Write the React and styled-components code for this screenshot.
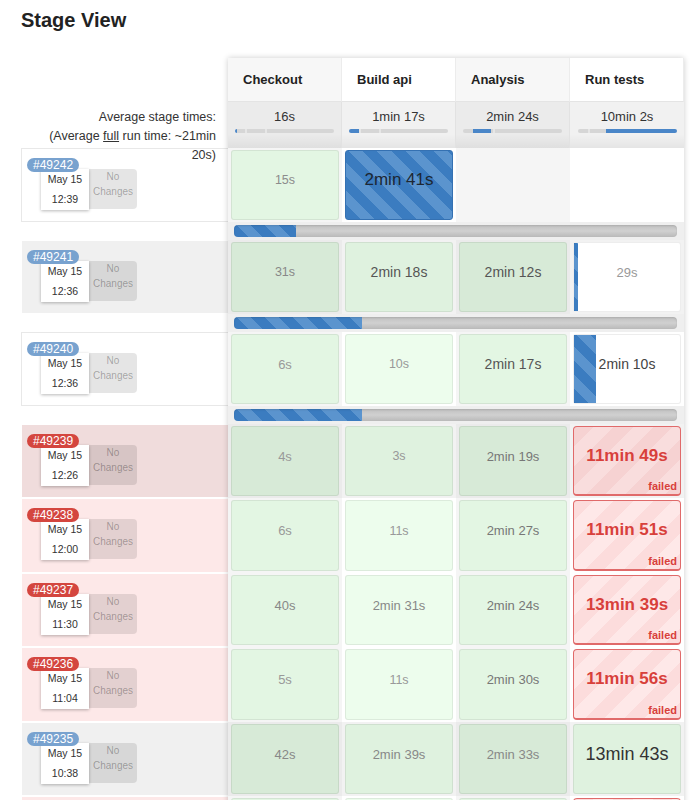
import styled, { createGlobalStyle, css } from "styled-components";

const GlobalStyle = createGlobalStyle`
  body {
    margin: 0;
    background: #fff;
    font-family: "Liberation Sans", Arial, sans-serif;
    color: #333;
  }
`;

const BLUE_STRIPES = "repeating-linear-gradient(45deg, #3b7cc0 0 10px, #5b94ce 10px 20px)";
const RED_STRIPES = (base, light) =>
  `repeating-linear-gradient(135deg, ${base} 0 14px, ${light} 14px 28px)`;

const columns = ["Checkout", "Build api", "Analysis", "Run tests"];
const averages = [
  { t: "16s", left: 0, w: 2 },
  { t: "1min 17s", left: 0, w: 10 },
  { t: "2min 24s", left: 10, w: 18 },
  { t: "10min 2s", left: 28, w: 71 },
];

const ok = (t, size, color) => ({ state: "ok", t, size, color });
const run = (t, size, color) => ({ state: "run", t, size, color });
const part = (t, size, color, fill) => ({ state: "part", t, size, color, fill });
const fail = (t) => ({ state: "fail", t, size: 17 });
const empty = { state: "empty" };

const builds = [
  { id: "49242", time: "12:39", progress: 14,
    cells: [ok("15s", 12.5, "#8c8c8c"), run("2min 41s", 17, "#1d2733"), empty, empty] },
  { id: "49241", time: "12:36", dark: true, progress: 29,
    cells: [ok("31s", 12.5, "#888"), ok("2min 18s", 14, "#555"), ok("2min 12s", 14, "#555"), part("29s", 13, "#999", 4)] },
  { id: "49240", time: "12:36", progress: 29,
    cells: [ok("6s", 13, "#999"), ok("10s", 12.5, "#999"), ok("2min 17s", 14, "#555"), part("2min 10s", 14, "#444", 22)] },
  { id: "49239", time: "12:26", failed: true, dark: true,
    cells: [ok("4s", 13, "#999"), ok("3s", 12.5, "#999"), ok("2min 19s", 13, "#777"), fail("11min 49s")] },
  { id: "49238", time: "12:00", failed: true,
    cells: [ok("6s", 13, "#999"), ok("11s", 12.5, "#999"), ok("2min 27s", 13, "#777"), fail("11min 51s")] },
  { id: "49237", time: "11:30", failed: true,
    cells: [ok("40s", 13, "#888"), ok("2min 31s", 13, "#888"), ok("2min 24s", 13, "#777"), fail("13min 39s")] },
  { id: "49236", time: "11:04", failed: true,
    cells: [ok("5s", 13, "#999"), ok("11s", 12.5, "#999"), ok("2min 30s", 13, "#777"), fail("11min 56s")] },
  { id: "49235", time: "10:38", dark: true,
    cells: [ok("42s", 13, "#888"), ok("2min 39s", 13, "#888"), ok("2min 33s", 13, "#888"), ok("13min 43s", 18, "#333")] },
  { id: "49234", time: "10:12", failed: true,
    cells: [ok("6s", 13, "#999"), ok("12s", 12.5, "#999"), ok("2min 20s", 13, "#777"), fail("11min 40s")] },
];

const Page = styled.div`
  padding: 8px 0 0 21px;
  height: 792px;
  overflow: hidden;
`;

const Title = styled.h2`
  margin: 0;
  font-size: 20px;
  line-height: 24px;
  font-weight: bold;
  color: #222;
`;

const Table = styled.div`
  display: flex;
  margin-top: 26px;
`;

/* ---------- left column ---------- */
const BuildsCol = styled.div`
  width: 207px;
  flex: none;
`;

const HeadBlank = styled.div`
  height: 44px;
`;

const AvgLabel = styled.div`
  height: 46px;
  box-sizing: border-box;
  padding: 6px 12px 0 0;
  font-size: 12.5px;
  line-height: 19px;
  color: #333;
  text-align: right;
  position: relative;
  z-index: 2;

  p {
    margin: 0 0 0 auto;
    width: 182px;
  }
  u {
    text-decoration: underline;
  }
`;

const rowBg = ({ $failed, $dark }) => {
  if ($failed) return $dark ? "#f0dcdc" : "#fde8e8";
  return $dark ? "#f0f0f0" : "#fff";
};

const BuildRow = styled.div`
  height: ${(p) => p.$h}px;
  box-sizing: border-box;
  padding: 6px 0 0 5px;
  background: ${rowBg};
  border: 1px solid ${(p) => (p.$failed || p.$dark ? "#fff" : "#e8e8e8")};
  border-right: none;
`;

const Gap = styled.div`
  height: 18px;
`;

const Badge = styled.span`
  position: relative;
  z-index: 1;
  display: inline-block;
  height: 14px;
  padding: 0 6px;
  border-radius: 8px;
  background: ${(p) => (p.$failed ? "#d4463f" : "#78a2cf")};
  color: #fff;
  font-size: 12px;
  line-height: 14px;
`;

const ChangeRow = styled.div`
  display: flex;
  margin: -4px 0 0 14px;
`;

const DateBox = styled.div`
  width: 48px;
  height: 41px;
  background: #fff;
  box-shadow: 0 1px 3px rgba(0, 0, 0, 0.28);
  font-size: 10.5px;
  line-height: 20px;
  color: #333;
  text-align: center;
`;

const NoChanges = styled.div`
  width: 48px;
  height: 40px;
  background: rgba(0, 0, 0, 0.1);
  border-radius: 0 4px 4px 0;
  font-size: 10px;
  line-height: 15px;
  color: rgba(0, 0, 0, 0.3);
  text-align: center;
`;

/* ---------- stages panel ---------- */
const StagesPanel = styled.div`
  width: 456px;
  flex: none;
  box-shadow: 0 0 6px rgba(0, 0, 0, 0.2);
`;

const Grid = styled.div`
  display: grid;
  grid-template-columns: repeat(4, 114px);
`;

const HeadCell = styled.div`
  height: 44px;
  box-sizing: border-box;
  display: flex;
  align-items: center;
  padding-left: 15px;
  font-size: 13px;
  font-weight: bold;
  color: #222;
  background: ${(p) => (p.$odd ? "#f7f7f7" : "#fff")};
  border-right: 1px solid #ececec;
  border-bottom: 1px solid #e4e4e4;
  &:last-child {
    border-right: none;
  }
`;

const AvgCell = styled.div`
  height: 46px;
  box-sizing: border-box;
  padding-top: 7px;
  text-align: center;
  font-size: 13px;
  line-height: 16px;
  color: #333;
  background: linear-gradient(to bottom, transparent 70%, rgba(0, 0, 0, 0.05)),
    ${(p) => (p.$odd ? "#ebebeb" : "#f1f1f1")};
  border-right: 1px solid #e2e2e2;
  &:last-child {
    border-right: none;
  }
`;

const AvgBar = styled.div`
  width: 99px;
  height: 4px;
  margin: 4px auto 0;
  border-radius: 2px;
  background: linear-gradient(#4a86c8, #4a86c8) ${(p) => p.$left}px 0 / ${(p) => p.$w}px 100% no-repeat,
    linear-gradient(90deg, transparent 10px, #e6e6e6 10px 12px, transparent 12px 30px, #e6e6e6 30px 32px, transparent 32px),
    #d6d6d6;
`;

const Slot = styled.div`
  height: ${(p) => p.$h}px;
  box-sizing: border-box;
  padding: 2px 3px;
  background: ${(p) =>
    p.$dark ? (p.$odd ? "#ebebeb" : "#f2f2f2") : p.$odd ? "#f5f5f5" : "#fff"};
`;

const okBg = (dark, odd) => {
  if (dark) return odd ? "#d7ead7" : "#dff2df";
  return odd ? "#e3f6e3" : "#edfded";
};

const Cell = styled.div`
  position: relative;
  height: 100%;
  box-sizing: border-box;
  display: flex;
  align-items: center;
  justify-content: center;
  padding-bottom: 10px;
  border-radius: 3px;
  border: 1px solid rgba(0, 0, 0, 0.07);
  font-size: ${(p) => p.$size}px;
  color: ${(p) => p.$color};
  white-space: nowrap;

  ${(p) =>
    p.$state === "ok" &&
    css`
      background: ${okBg(p.$dark, p.$odd)};
    `}
  ${(p) =>
    p.$state === "run" &&
    css`
      background: ${BLUE_STRIPES};
      border-color: #3571b2;
    `}
  ${(p) =>
    p.$state === "part" &&
    css`
      background: ${BLUE_STRIPES} 0 0 / ${p.$fill}px 100% no-repeat, #fff;
    `}
  ${(p) =>
    p.$state === "fail" &&
    css`
      background: ${p.$dark ? RED_STRIPES("#f6d2d2", "#f9dddd") : RED_STRIPES("#fcdcdc", "#fee8e8")};
      border: 1px solid #e06a6a;
      border-bottom-width: 2px;
      border-radius: 4px;
      font-weight: bold;
      color: #d8403b;
    `}
  ${(p) =>
    p.$state === "empty" &&
    css`
      border: none;
      background: transparent;
    `}
`;

const FailedTag = styled.span`
  position: absolute;
  right: 3px;
  bottom: 2px;
  font-size: 11px;
  font-weight: bold;
  color: #d8403b;
`;

const BarRow = styled.div`
  height: 18px;
  box-sizing: border-box;
  padding: 3px 7px 3px 6px;
  background: #efefef;
`;

const Track = styled.div`
  height: 12px;
  border-radius: 4px;
  background: ${BLUE_STRIPES} 0 0 / ${(p) => p.$pct}% 100% no-repeat,
    linear-gradient(#c2c2c2, #d0d0d0 50%, #bababa);
  box-shadow: inset 0 1px 2px rgba(0, 0, 0, 0.12);
`;

const rowHeight = (i) => (i === 4 || i === 6 ? 75 : 74);

const StageCell = ({ cell, dark, odd, h }) => (
  <Slot $dark={dark} $odd={odd} $h={h}>
    <Cell
      $state={cell.state}
      $size={cell.size}
      $color={cell.color}
      $fill={cell.fill}
      $dark={dark}
      $odd={odd}
    >
      {cell.t}
      {cell.state === "fail" && <FailedTag>failed</FailedTag>}
    </Cell>
  </Slot>
);

const App = () => (
  <Page>
    <GlobalStyle />
    <Title>Stage View</Title>
    <Table>
      <BuildsCol>
        <HeadBlank />
        <AvgLabel>
          <p>Average stage times:</p>
          <p>
            (Average <u>full</u> run time: ~21min 20s)
          </p>
        </AvgLabel>
        {builds.map((b, i) => (
          <div key={b.id}>
            <BuildRow $failed={b.failed} $dark={b.dark} $h={rowHeight(i)}>
              <Badge $failed={b.failed}>#{b.id}</Badge>
              <ChangeRow>
                <DateBox>
                  May 15
                  <br />
                  {b.time}
                </DateBox>
                <NoChanges>
                  No
                  <br />
                  Changes
                </NoChanges>
              </ChangeRow>
            </BuildRow>
            {b.progress && <Gap />}
          </div>
        ))}
      </BuildsCol>

      <StagesPanel>
        <Grid>
          {columns.map((name, i) => (
            <HeadCell key={name} $odd={i % 2 === 0}>
              {name}
            </HeadCell>
          ))}
          {averages.map((a, i) => (
            <AvgCell key={a.t} $odd={i % 2 === 0}>
              {a.t}
              <AvgBar $left={a.left} $w={a.w} />
            </AvgCell>
          ))}
        </Grid>
        {builds.map((b, r) => (
          <div key={b.id}>
            <Grid>
              {b.cells.map((cell, i) => (
                <StageCell
                  key={i}
                  cell={cell}
                  dark={b.dark}
                  odd={i % 2 === 0}
                  h={rowHeight(r)}
                />
              ))}
            </Grid>
            {b.progress && (
              <BarRow>
                <Track $pct={b.progress} />
              </BarRow>
            )}
          </div>
        ))}
      </StagesPanel>
    </Table>
  </Page>
);

export default App;
